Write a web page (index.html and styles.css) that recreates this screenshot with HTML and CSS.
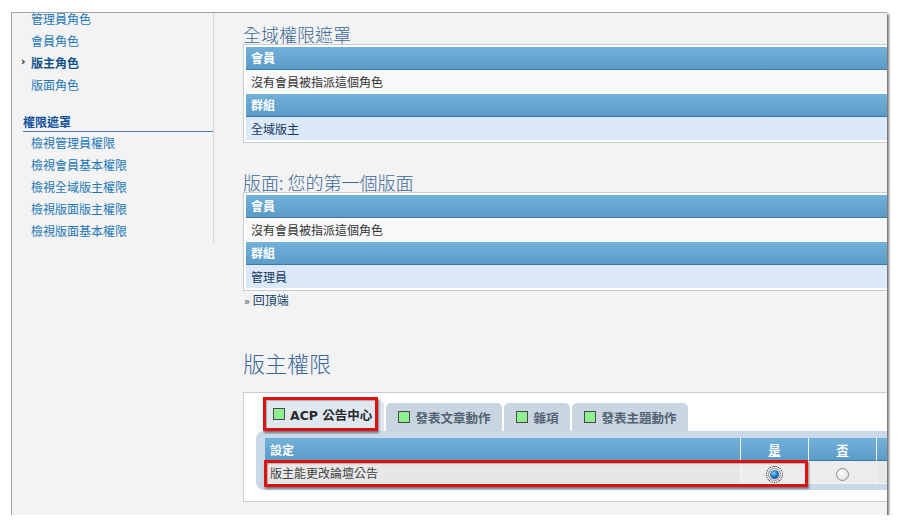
FILE: index.html
```html
<!DOCTYPE html>
<html lang="zh-Hant">
<head>
<meta charset="utf-8">
<title>版主權限</title>
<link rel="stylesheet" href="styles.css">
</head>
<body>
<div class="frame">
  <aside class="sidebar">
    <ul class="menu first">
      <li><a href="#">管理員角色</a></li>
      <li><a href="#">會員角色</a></li>
      <li class="active"><a href="#">版主角色</a></li>
      <li><a href="#">版面角色</a></li>
    </ul>
    <div class="menu-head">權限遮罩</div>
    <ul class="menu">
      <li><a href="#">檢視管理員權限</a></li>
      <li><a href="#">檢視會員基本權限</a></li>
      <li><a href="#">檢視全域版主權限</a></li>
      <li><a href="#">檢視版面版主權限</a></li>
      <li><a href="#">檢視版面基本權限</a></li>
    </ul>
  </aside>
  <main class="main">
    <h2 class="sec-title first">全域權限遮罩</h2>
    <div class="mask">
      <div class="mask-th">會員</div>
      <div class="mask-td plain">沒有會員被指派這個角色</div>
      <div class="mask-th">群組</div>
      <div class="mask-td blue">全域版主</div>
    </div>
    <h2 class="sec-title">版面: 您的第一個版面</h2>
    <div class="mask">
      <div class="mask-th">會員</div>
      <div class="mask-td plain">沒有會員被指派這個角色</div>
      <div class="mask-th">群組</div>
      <div class="mask-td blue">管理員</div>
    </div>
    <p class="back"><span class="raquo">»</span> <a href="#">回頂端</a></p>
    <h1 class="big-title">版主權限</h1>
    <div class="perm-box">
      <div class="tabs">
        <div class="tab active"><span class="sq"></span>ACP 公告中心</div>
        <div class="tab"><span class="sq"></span>發表文章動作</div>
        <div class="tab"><span class="sq"></span>雜項</div>
        <div class="tab"><span class="sq"></span>發表主題動作</div>
      </div>
      <div class="panel">
        <table class="perm">
          <thead>
            <tr>
              <th class="c-name">設定</th>
              <th class="c-opt"><a href="#">是</a></th>
              <th class="c-opt"><a href="#">否</a></th>
              <th class="c-rest"></th>
            </tr>
          </thead>
          <tbody>
            <tr>
              <td class="c-name">版主能更改論壇公告</td>
              <td class="c-opt"><span class="radio on"></span></td>
              <td class="c-opt"><span class="radio"></span></td>
              <td class="c-rest"></td>
            </tr>
          </tbody>
        </table>
      </div>
      <div class="annot annot-tab"></div>
      <div class="annot annot-row"></div>
    </div>
  </main>
</div>
</body>
</html>
```

FILE: styles.css
```css
* { box-sizing: border-box; }

html, body {
  margin: 0;
  padding: 0;
  background: #ffffff;
}

body {
  font-family: "Noto Sans CJK TC", "Noto Sans", sans-serif;
  font-size: 12px;
  color: #333;
}

a { text-decoration: none; color: inherit; }

.frame {
  margin: 12px 0 0 11px;
  width: 876px;
  height: 503px;
  background: #f3f3f3;
  border-top: 1px solid #a3a3a3;
  border-left: 1px solid #a3a3a3;
  box-shadow: 2px 2px 2px rgba(0, 0, 0, 0.55);
  display: flex;
  overflow: hidden;
}

/* ---------- sidebar ---------- */
.sidebar {
  width: 202px;
  flex: none;
  height: 230px;
  border-right: 1px solid #d6d6d6;
}

.menu {
  list-style: none;
  margin: 0;
  padding: 0;
}

.menu.first { margin-top: -5px; }

.menu li {
  position: relative;
  height: 22px;
  line-height: 22px;
  padding-left: 19px;
  color: #2277b6;
  font-size: 12px;
  white-space: nowrap;
}

.menu li.active {
  color: #105289;
  font-weight: bold;
}

.menu li.active::before {
  content: "›";
  position: absolute;
  left: 9px;
  top: -1px;
  color: #111;
  font-family: "DejaVu Sans", sans-serif;
  font-weight: bold;
  font-size: 11px;
}

.menu-head {
  margin: 15px 0 0 11px;
  height: 21px;
  line-height: 21px;
  font-weight: bold;
  color: #115098;
  border-bottom: 1px solid #4a7aa6;
}

/* ---------- main ---------- */
.main {
  flex: 1;
  min-width: 0;
  padding-left: 29px;
  overflow: hidden;
}

.sec-title {
  margin: 29px 0 0;
  font-size: 18px;
  line-height: 20px;
  font-weight: 300;
  color: #3a6797;
  white-space: nowrap;
}

.sec-title.first { margin-top: 11px; }

.mask {
  width: 800px;
  border: 1px solid #cccccc;
  background: #fff;
  padding: 2px 0 1px 2px;
}

.mask-th {
  height: 23px;
  line-height: 22px;
  padding-left: 5px;
  color: #fff;
  font-weight: bold;
  background: linear-gradient(#72b1d9, #5b9bc8);
  border-bottom: 1px solid #3d77a4;
}

.mask-td {
  height: 24px;
  line-height: 23px;
  padding-left: 5px;
  border-bottom: 1px solid #fff;
}

.mask-td.plain { background: #f8f8f8; color: #333; }
.mask-td.blue { background: #dce9fa; color: #17375f; }

.back {
  margin: 1px 0 0;
  line-height: 16px;
  color: #0f3f6e;
}

.raquo {
  font-family: "DejaVu Sans", sans-serif;
  font-size: 10px;
  color: #444;
  padding-left: 1px;
}

.big-title {
  margin: 40px 0 0;
  font-size: 22px;
  line-height: 24px;
  font-weight: 300;
  color: #3a6797;
}

/* ---------- permission box ---------- */
.perm-box {
  position: relative;
  margin-top: 18px;
  width: 800px;
  background: #ffffff;
  border: 1px solid #cccccc;
  padding: 7px 0 11px 0;
}

.tabs {
  display: flex;
  align-items: flex-end;
  gap: 2px;
  height: 31px;
  padding-left: 20px;
}

.tab {
  height: 28px;
  display: flex;
  align-items: center;
  padding: 0 12px 0 12px;
  background: #c9d6e1;
  border-radius: 5px 5px 0 0;
  color: #536373;
  font-size: 12.5px;
  font-weight: bold;
  white-space: nowrap;
  font-family: "DejaVu Sans", "Noto Sans CJK TC", sans-serif;
}

.tab.active {
  height: 31px;
  padding: 0 12px 3px 9px;
  background: #dfe7ef;
  color: #2a2a2a;
}

.tab .sq {
  width: 12px;
  height: 12px;
  background: #8ff08f;
  border: 1px solid #4a4a4a;
  margin-right: 5px;
  flex: none;
}

.panel {
  margin-left: 12px;
  background: #c9d9e7;
  border-radius: 8px 0 0 8px;
  padding: 7px 0 6px 9px;
}

.perm {
  border-collapse: separate;
  border-spacing: 0;
  width: 700px;
  table-layout: fixed;
}

.perm th {
  height: 23px;
  padding: 0 0 0 5px;
  text-align: left;
  color: #fff;
  font-weight: bold;
  font-size: 12px;
  background: linear-gradient(#72b1d9, #5b9bc8);
  border-bottom: 1px solid #3d77a4;
}

.perm td {
  height: 23px;
  padding: 0 0 0 5px;
  background: #e7e7e7;
  color: #444;
  border-bottom: 1px solid #f4f4f4;
}

.perm .c-name { width: 475px; padding-left: 5px; }
.perm .c-opt {
  width: 68px;
  padding: 0;
  text-align: center;
  border-left: 1px solid #f4f4f4;
}
.perm td.c-opt { background: #ececec; }
.perm .c-rest { border-left: 1px solid #f4f4f4; }

.perm th a {
  color: #fff;
  text-decoration: underline;
}

.radio {
  display: inline-block;
  position: relative;
  width: 13px;
  height: 13px;
  border-radius: 50%;
  border: 1px solid #8d8d8d;
  background: radial-gradient(circle at 40% 35%, #ffffff, #dadada);
  vertical-align: middle;
  margin-top: 2px;
}

.radio.on {
  outline: 1px dotted #111;
  outline-offset: 1px;
}

.radio.on::after {
  content: "";
  position: absolute;
  left: 1px;
  top: 1px;
  width: 9px;
  height: 9px;
  border-radius: 50%;
  background: radial-gradient(circle at 40% 35%, #8fd0f5, #1a6fb5 50%, #0a3d70);
}

/* ---------- red annotations ---------- */
.annot {
  position: absolute;
  border: 3px solid #e01010;
  box-shadow: 1px 2px 2px rgba(0, 0, 0, 0.45), inset 1px 1px 1px rgba(0, 0, 0, 0.25);
  pointer-events: none;
}

.annot-tab {
  left: 19px;
  top: 4px;
  width: 115px;
  height: 34px;
}

.annot-row {
  left: 20px;
  top: 67px;
  width: 544px;
  height: 27px;
}
```
